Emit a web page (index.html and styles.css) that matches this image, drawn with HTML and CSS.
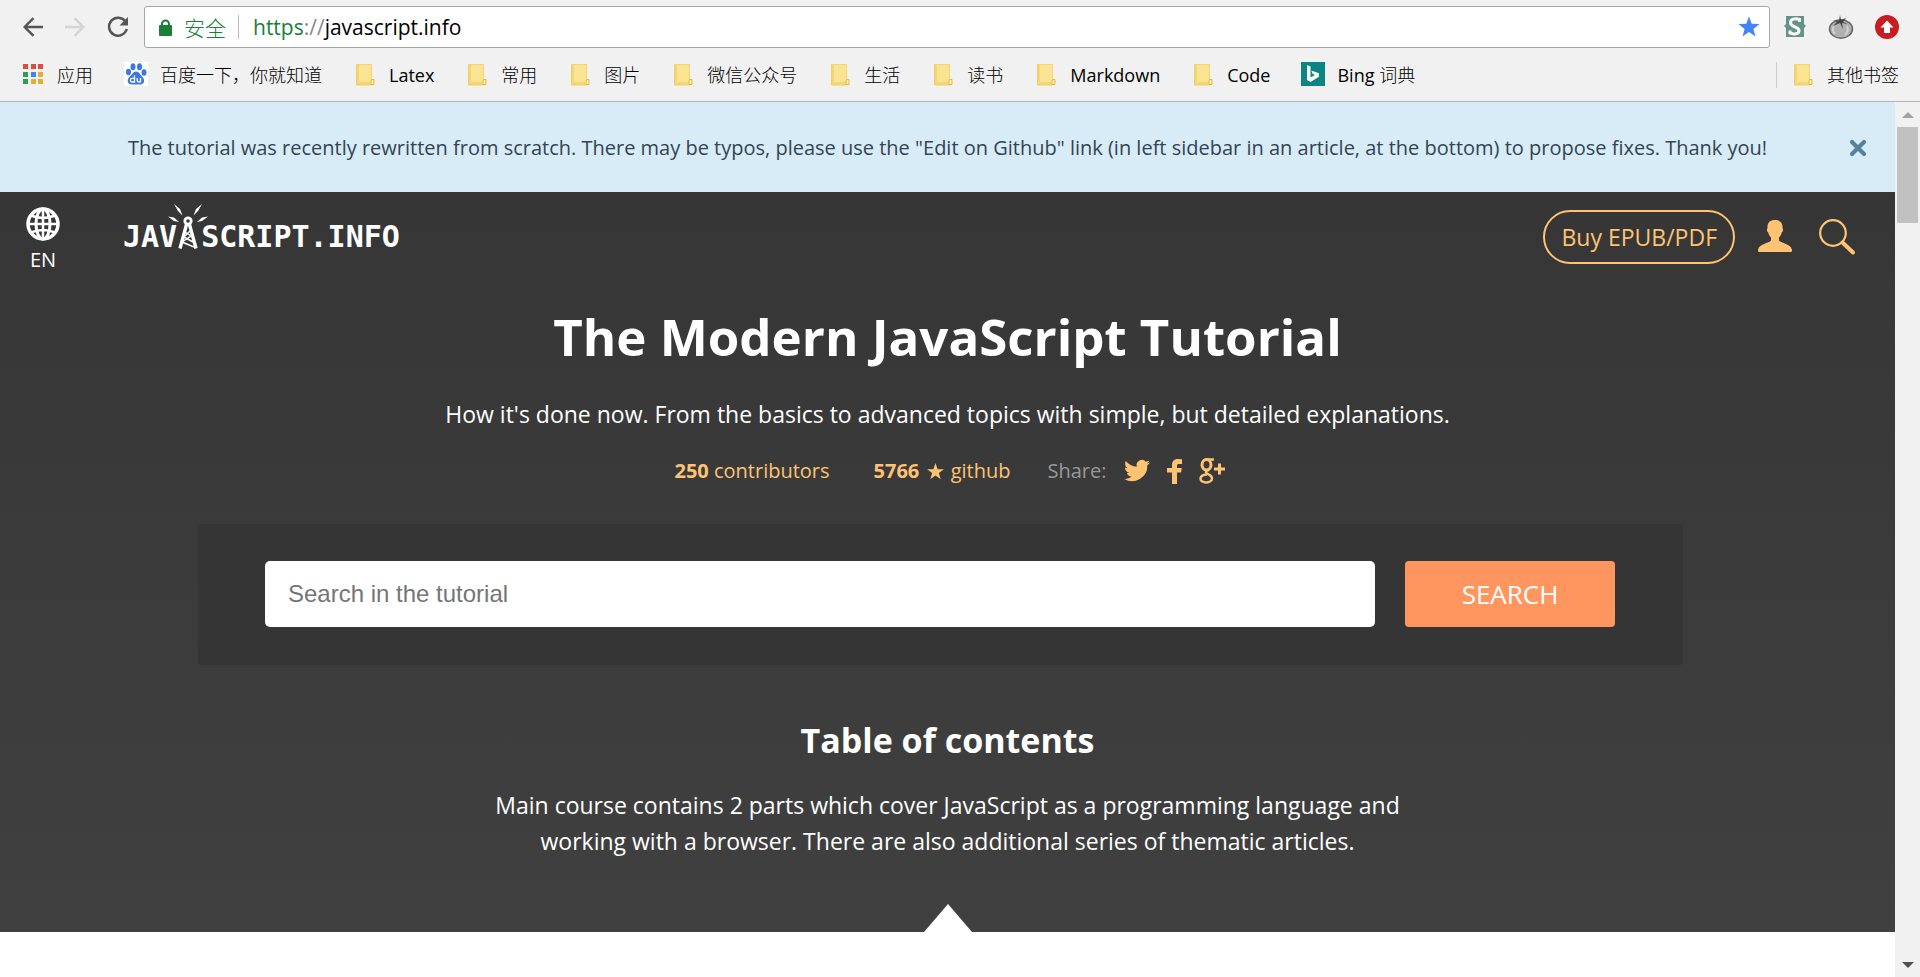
FILE: index.html
```html
<!DOCTYPE html>
<html lang="en">
<head>
<meta charset="utf-8">
<meta name="viewport" content="width=device-width, initial-scale=1">
<title>The Modern JavaScript Tutorial</title>
<link rel="stylesheet" href="styles.css">
</head>
<body>
<svg class="defs" aria-hidden="true">
  <symbol id="folder" viewBox="0 0 24 24">
    <path d="M4 2h15v15l2 1v5H4z" fill="#f4d675"/>
    <path d="M6 3h12v17H6z" fill="#fbe394"/>
    <path d="M3.500 2v21h15" fill="none" stroke="#f0cf68"/>
    <path d="M18.500 17.500h2.500v5h-3v-3z" fill="#fff0a8" stroke="#e3bb42"/>
  </symbol>
</svg>
<div class="browser">
  <div class="toolbar">
    <button class="tool" aria-label="Back"><svg width="20" height="20" viewBox="0 0 20 20"><path d="M20 10H2M10.500 1.200 1.700 10l8.800 8.800" fill="none" stroke="#555" stroke-width="2.400"/></svg></button>
    <button class="tool" aria-label="Forward"><svg width="20" height="20" viewBox="0 0 20 20"><path d="M0 10h18M9.500 1.200 18.300 10l-8.800 8.800" fill="none" stroke="#d4d4d4" stroke-width="2.400"/></svg></button>
    <button class="tool" aria-label="Reload"><svg width="22" height="22" viewBox="0 0 22 22"><path d="M18.500 5.500A9 9 0 1 0 19.800 13" fill="none" stroke="#555" stroke-width="2.500"/><path d="M21 1v8.500h-8.500z" fill="#555"/></svg></button>
    <div class="address">
      <svg width="13" height="17" viewBox="0 0 13 17"><path d="M3 8V5a3.500 3.500 0 0 1 7 0v3" fill="none" stroke="#188038" stroke-width="2"/><rect y="6" width="13" height="11" rx="1" fill="#188038"/></svg>
      <span class="secure">安全</span>
      <span class="address-rule"></span>
      <span class="url"><span class="scheme">https</span><span class="slashes">://</span>javascript.info</span>
      <button class="star" aria-label="Bookmark this page"><svg width="22" height="22" viewBox="0 0 22 22"><path d="m11 .5 2.700 7.300 7.800.3-6.100 4.800 2.100 7.600-6.500-4.400-6.500 4.400 2.100-7.600L.5 8.100l7.800-.3z" fill="#4285f4"/></svg></button>
    </div>
    <div class="extensions">
      <button class="tool" aria-label="Stylus"><svg width="24" height="24" viewBox="0 0 24 24"><path d="M3 1h18v8l2 2-2 2v9H3v-9l-2-2 2-2z" fill="#649488"/><path d="M16.500 7V4.500c-5-1.500-9-.5-9 3.300 0 4.700 8.500 3.500 8.500 7.700 0 4-5 4-9 2.500V15.500" fill="none" stroke="#fff" stroke-width="3"/></svg></button>
      <button class="tool" aria-label="Tomato timer"><svg width="26" height="24" viewBox="0 0 26 24"><ellipse cx="13" cy="14" rx="11.500" ry="9.200" fill="#b0b0b0" stroke="#666" stroke-width="1.500"/><path d="M6 11c-2 3-1 6 1 8M19 11c2 4 0 7-2 9" fill="none" stroke="#d0d0d0" stroke-width="2"/><path d="M12 0l1 5 5-2-3 4 5 2-6-1 1 6-3-6-7 3 4-4-4-2 6 1z" fill="#444"/></svg></button>
      <button class="tool" aria-label="Upload"><svg width="24" height="24" viewBox="0 0 24 24"><circle cx="12" cy="12" r="12" fill="#c91b20"/><path d="m12 5.500 6.500 7H15V18H9v-5.500H5.500z" fill="#fff"/></svg></button>
    </div>
  </div>
  <nav class="bookmarks" aria-label="Bookmarks">
    <a href="#"><svg width="24" height="24" viewBox="0 0 24 24"><path fill="#e24a3b" d="M2 2h5v5H2zM10 2h5v5h-5zM17 2h5v5h-5z"/><path fill="#2f9e58" d="M2 10h5v5H2zM2 17h5v5H2z"/><path fill="#3b86f0" d="M10 10h5v5h-5z"/><path fill="#f0a63a" d="M17 10h5v5h-5z"/><path fill="#e3b22c" d="M10 17h5v5h-5zM17 17h5v5h-5z"/></svg>应用</a>
    <a href="#"><svg width="24" height="24" viewBox="0 0 24 24"><path fill="#fff" d="M0 0h24v24H0z"/><g fill="#3b78e0"><ellipse cx="9" cy="4.800" rx="2.500" ry="3.500"/><ellipse cx="15.500" cy="4.800" rx="2.500" ry="3.500"/><ellipse cx="4.500" cy="10" rx="2.500" ry="3.200"/><ellipse cx="20" cy="10.500" rx="2.500" ry="3.200"/><path d="M12 9.500c3 0 4 3 6.500 5.500 3 3 1.500 7.500-2 7.500h-9C4 22.500 2 18 5.500 15 8.500 12.500 9 9.500 12 9.500z"/></g><path d="M10.500 13.500v6.500H8.300a1.800 1.800 0 0 1 0-3.700h2M13.200 16v2.500c0 2 3.300 2 3.300 0V16v4.500" fill="none" stroke="#fff" stroke-width="1.300"/></svg>百度一下，你就知道</a>
    <a class="latin" href="#"><svg width="24" height="24"><use href="#folder"/></svg>Latex</a>
    <a href="#"><svg width="24" height="24"><use href="#folder"/></svg>常用</a>
    <a href="#"><svg width="24" height="24"><use href="#folder"/></svg>图片</a>
    <a href="#"><svg width="24" height="24"><use href="#folder"/></svg>微信公众号</a>
    <a href="#"><svg width="24" height="24"><use href="#folder"/></svg>生活</a>
    <a href="#"><svg width="24" height="24"><use href="#folder"/></svg>读书</a>
    <a class="latin" href="#"><svg width="24" height="24"><use href="#folder"/></svg>Markdown</a>
    <a class="latin" href="#"><svg width="24" height="24"><use href="#folder"/></svg>Code</a>
    <a class="latin" href="#"><svg width="24" height="24" viewBox="0 0 24 24"><path fill="#0c8484" d="M0 0h24v24H0z"/><path fill="#fff" d="m6 3 3.500 1.500v11L14 13l-2.300-1-1.400-3.500L18 11.200v3.600L9.500 20 6 18z"/></svg><span>Bing <span class="han">词典</span></span></a>
    <a class="other" href="#"><svg width="24" height="24"><use href="#folder"/></svg>其他书签</a>
  </nav>
</div>
<div class="viewport">
  <div class="page">
    <div class="notice">
      <p>The tutorial was recently rewritten from scratch. There may be typos, please use the "Edit on Github" link (in left sidebar in an article, at the bottom) to propose fixes. Thank you!</p>
      <button class="close" aria-label="Close"><svg width="18" height="18" viewBox="0 0 18 18"><path d="m3 3 12 12M15 3 3 15" stroke="#5382a1" stroke-width="4.200" stroke-linecap="round"/></svg></button>
    </div>
    <div class="hero">
      <header class="sitebar">
        <button class="lang"><svg width="34" height="34" viewBox="0 0 34 34" fill="none" stroke="#fff" stroke-width="3.500"><circle cx="17" cy="17" r="15"/><ellipse cx="17" cy="17" rx="7" ry="15" stroke-width="3"/><path d="M17 2v30M2 17h30M5 8.500q12 5 24 0M5 25.500q12-5 24 0" stroke-width="2.500"/></svg>EN</button>
        <a class="logo" href="#" aria-label="JavaScript.info">JAV<svg width="24" height="46" viewBox="0 0 24 46"><g fill="none" stroke="#fff"><circle cx="11" cy="17" r="3.200" stroke-width="2.800"/><path d="M9.500 20.500 3 44.500M12.500 20.500l6.500 24" stroke-width="3.400"/><path d="m8 28 6 4-9 6 12 5M13 27l-6 6 9 5" stroke-width="1.500"/></g><path fill="#fff" d="M5.500 11.500 1 7-3 0l6 5zM16.500 11.500 21 7l4-7-6 5zM2 18l-5-1-6-4.500 6 1zM20 18l5-1 6-4.500-6 1z"/></svg>SCRIPT.INFO</a>
        <div class="actions">
          <a class="buy" href="#">Buy EPUB/PDF</a>
          <button class="icon" aria-label="Log in"><svg width="36" height="34" viewBox="0 0 36 34"><path fill="#ffc373" d="M18 0c5 0 8 3 7.500 8 1 2 .5 4-.8 4.500-.7 3-1.700 4-2.700 5v3c2 3 12 3 13 9.500.2 1.500-.5 2-2 2H3c-1.500 0-2.200-.5-2-2C2 23.500 12 23.500 14 20.500v-3c-1-1-2-2-2.700-5-1.300-.5-1.800-2.500-.8-4.500C10 3 13 0 18 0z"/></svg></button>
          <button class="icon" aria-label="Search"><svg width="36" height="36" viewBox="0 0 36 36" fill="none" stroke="#ffc373"><circle cx="14" cy="14" r="12.800" stroke-width="2.200"/><path d="m23.500 23.500 10.500 10" stroke-width="4" stroke-linecap="round"/></svg></button>
        </div>
      </header>
      <main class="intro">
        <h1>The Modern JavaScript Tutorial</h1>
        <p class="lead">How it's done now. From the basics to advanced topics with simple, but detailed explanations.</p>
        <div class="stats">
          <a href="#"><b>250</b> contributors</a>
          <a href="#"><b>5766</b> <svg width="17" height="17" viewBox="0 0 22 22"><path d="m11 0 2.700 8H22l-6.700 5 2.500 8L11 16.200 4.200 21l2.500-8L0 8h8.300z" fill="#ffc373"/></svg> github</a>
          <div class="share">Share:
            <a href="#" aria-label="Twitter"><svg width="26" height="22" viewBox="0 0 26 22"><path fill="#ffc373" d="M26 2.600a10 10 0 0 1-3 .9A5.500 5.500 0 0 0 25.300.5c-1 .6-2.200 1-3.400 1.300a5.300 5.300 0 0 0-9.100 4.900C8.400 6.500 4.400 4.300 1.800 1a5.400 5.400 0 0 0 1.700 7.200 5 5 0 0 1-2.500-.7c0 2.700 1.800 4.800 4.300 5.300-.8.200-1.600.2-2.400.1a5.400 5.400 0 0 0 5 3.700A10.700 10.700 0 0 1 0 18.800 15.200 15.200 0 0 0 23.300 5.300c1-.7 2-1.600 2.700-2.700z"/></svg></a>
            <a href="#" aria-label="Facebook"><svg width="15" height="25" viewBox="0 0 15 25"><path fill="#ffc373" d="M15 .3V5h-2.700C10.500 5 10 5.500 10 7v2h4.700l-.6 4.500H10V25H5V13.500H0V9h5V6C5 2 7.500 0 11 0z"/></svg></a>
            <a href="#" aria-label="Google Plus"><svg width="26" height="26" viewBox="0 0 26 26" fill="none" stroke="#ffc373"><ellipse cx="7.500" cy="6.800" rx="4.500" ry="5.200" stroke-width="3"/><path d="M8 1.500h7M10 12q-5 1-2 3.500c3 1.800 5 2 5 4.700 0 5.500-11.500 5.500-11.500.5 0-3 3-4 6.500-4.200" stroke-width="2.500"/><path d="M20.500 5.500v11M15 11h11" stroke-width="3"/></svg></a>
          </div>
        </div>
        <form class="search" role="search" onsubmit="return false">
          <input type="text" placeholder="Search in the tutorial" aria-label="Search in the tutorial">
          <button type="submit">SEARCH</button>
        </form>
        <h2>Table of contents</h2>
        <p class="about">Main course contains 2 parts which cover JavaScript as a programming language and working with a browser. There are also additional series of thematic articles.</p>
        <svg class="pointer" width="48" height="28" viewBox="0 0 48 28"><path fill="#fff" d="m24 0 24 28H0z"/></svg>
      </main>
    </div>
  </div>
  <div class="scrollbar" aria-hidden="true">
    <svg width="12" height="6" viewBox="0 0 12 6"><path fill="#a3a3a3" d="m6 0 6 6H0z"/></svg>
    <div class="thumb"></div>
    <svg width="12" height="6" viewBox="0 0 12 6"><path fill="#505050" d="M0 0h12L6 6z"/></svg>
  </div>
</div>
</body>
</html>
```
FILE: styles.css
```css
* { box-sizing: border-box; }

body {
  display: flex;
  flex-direction: column;
  min-height: 100vh;
  margin: 0;
  background: #fff;
  font-family: "Open Sans", "Noto Sans CJK SC", sans-serif;
}

button {
  padding: 0;
  border: 0;
  background: none;
  color: inherit;
  font: inherit;
}

a { color: inherit; text-decoration: none; }
p, h1, h2 { margin: 0; }
svg { display: block; flex: none; overflow: visible; }
.defs { position: absolute; width: 0; height: 0; }

/* Browser bars */
.browser {
  border-bottom: 1px solid #b3b3b3;
  background: #f1f1f1;
}

.toolbar {
  display: flex;
  align-items: center;
  gap: 22px;
  padding: 6px 21px 0 23px;
}

.tool { display: flex; }

.address {
  display: flex;
  flex: 1;
  align-items: center;
  height: 42px;
  margin-left: -7px;
  padding: 0 9px 0 14px;
  border: 1px solid #a6a6a6;
  border-radius: 3px;
  background: #fff;
  font-size: 21px;
}

.secure { margin-left: 12px; color: #188038; font-weight: 300; }
.address-rule { width: 1px; height: 24px; margin: 0 14px 0 12px; background: #bbb; }
.scheme { color: #188038; }
.slashes { color: #888; }
.star { margin-left: auto; }
.extensions { display: flex; gap: 21px; margin-left: -9px; }

.bookmarks {
  display: flex;
  align-items: center;
  gap: 31px;
  height: 53px;
  padding: 0 21px;
  color: #000;
  font-size: 18px;
  font-weight: 300;
  line-height: 26px;
  white-space: nowrap;
}

.bookmarks a { display: flex; gap: 12px; }
.bookmarks .latin { font-weight: 400; }
.bookmarks .han { font-weight: 300; }
.bookmarks .other { margin-left: auto; padding-left: 14px; border-left: 1px solid #ccc; }

/* Scrolling area */
.viewport { display: flex; flex: 1; }
.page { flex: 1; min-width: 0; }

.scrollbar {
  display: flex;
  flex-direction: column;
  width: 25px;
  padding: 10px 2px 9px;
  background: #f1f1f1;
}

.scrollbar svg { align-self: center; }
.thumb { height: 96px; margin: 9px 0 auto; background: #c1c1c1; }

/* Notice */
.notice {
  display: flex;
  align-items: center;
  height: 90px;
  padding: 2px 28px 0 46px;
  background: #d8ecf8;
  color: #334452;
  font-size: 20px;
  line-height: 30px;
}

.notice p { flex: 1; text-align: center; }

/* Hero */
.hero {
  background: linear-gradient(#363636, #404040);
  color: #fff;
}

.sitebar {
  display: flex;
  align-items: flex-start;
  padding: 12px 40px 0 26px;
}

.lang {
  display: flex;
  flex-direction: column;
  align-items: center;
  gap: 4px;
  padding-top: 3px;
  font-size: 20px;
  line-height: 30px;
}

.logo {
  display: flex;
  align-items: flex-end;
  margin-left: 63px;
  font-family: "DejaVu Sans Mono", monospace;
  font-size: 30px;
  font-weight: 700;
  line-height: 26px;
}

.logo svg { align-self: flex-start; }

.actions {
  display: flex;
  align-items: center;
  gap: 22px;
  margin: 6px 0 0 auto;
  color: #ffc373;
}

.actions .icon + .icon { margin-left: 4px; }

.buy {
  padding: 0 16px;
  border: 2px solid #ffc373;
  border-radius: 27px;
  font-size: 23px;
  line-height: 50px;
}

.intro {
  display: flex;
  flex-direction: column;
  align-items: center;
  padding-top: 25px;
  text-align: center;
}

h1 { font-size: 51px; line-height: 72px; }
.lead { margin-top: 24px; font-size: 23px; line-height: 36px; }

.stats {
  display: flex;
  align-items: center;
  margin-top: 24px;
  padding-left: 4px;
  color: #ffc373;
  font-size: 20px;
  line-height: 30px;
}

.stats > a + a { margin-left: 44px; }
.stats > a svg { display: inline-block; margin: 0 2px; vertical-align: -2px; }

.share {
  display: flex;
  align-items: center;
  gap: 17px;
  margin-left: 37px;
  color: #999;
}

.search {
  display: flex;
  gap: 30px;
  align-self: stretch;
  margin: 38px 212px 0 198px;
  padding: 37px 68px 38px 67px;
  border-radius: 4px;
  background: #353535;
}

.search input {
  flex: 1;
  min-width: 0;
  height: 66px;
  padding: 0 23px;
  border: 0;
  border-radius: 5px;
  background: #fff;
  color: #333;
  font-family: "Liberation Sans", sans-serif;
  font-size: 24px;
}

.search input::placeholder { color: #757575; }

.search button {
  width: 210px;
  border-radius: 4px;
  background: #ff9660;
  font-size: 26px;
}

h2 { margin-top: 51px; font-size: 34px; line-height: 48px; }
.about { max-width: 940px; margin: 23px 0 45px; font-size: 23px; line-height: 36px; }
```
